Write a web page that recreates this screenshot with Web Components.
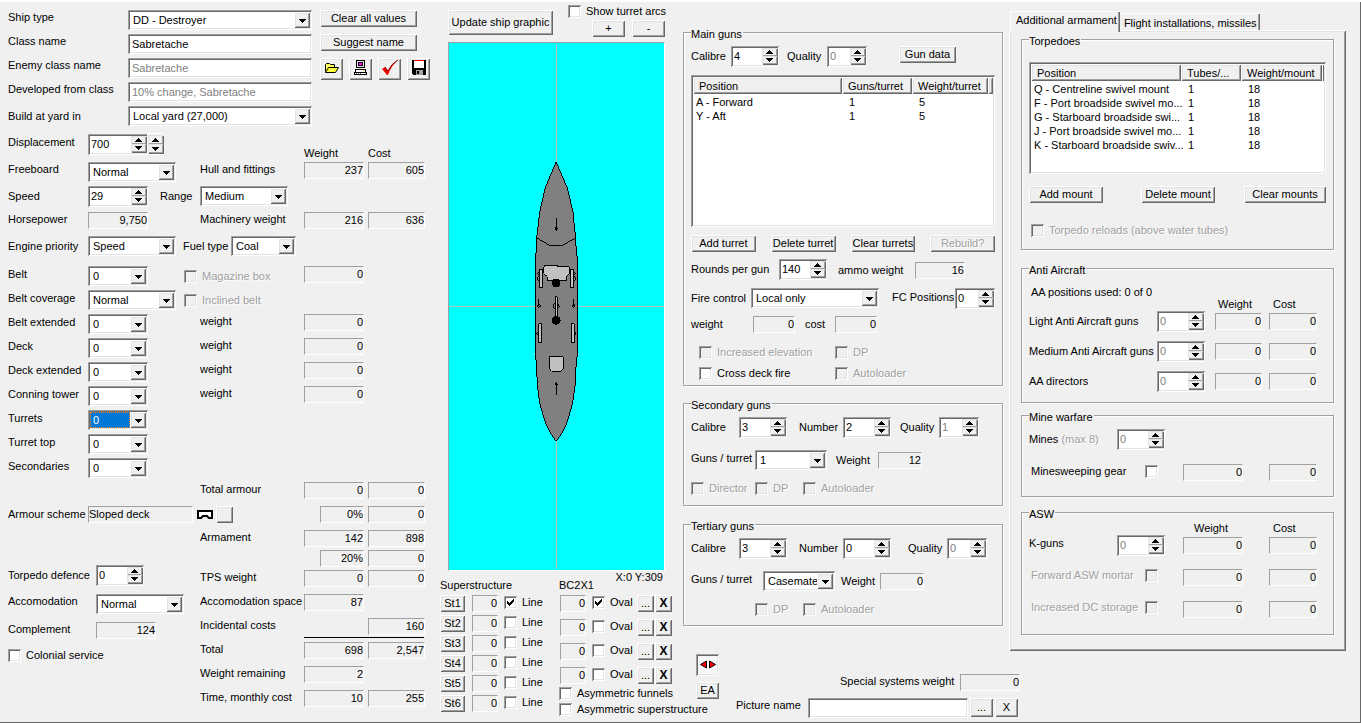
<!DOCTYPE html>
<html lang="en">
<head>
<meta charset="utf-8">
<title>Ship design</title>
<style>
html,body{margin:0;height:100%}
body{font:11px/14px "Liberation Sans",Arial,sans-serif;color:#000;background:#f0f0f0}
</style>
</head>
<body>
<ship-designer></ship-designer>
<script>
const BASE = `
*{box-sizing:border-box}
:host{
  --sunken:inset 1px 1px #a0a0a0,inset -1px -1px #fff,inset 2px 2px #696969,inset -2px -2px #e3e3e3;
  --raised:inset 1px 1px #fff,inset -1px -1px #696969,inset 2px 2px #e3e3e3,inset -2px -2px #a0a0a0;
}
button,input,select,output{font:inherit;color:inherit;margin:0;border:0;padding:0;border-radius:0;outline:0}
.row{display:flex;align-items:flex-start}
.cols{display:grid;grid-template-columns:var(--cols);align-items:start}
.dim{color:#a0a0a0;text-shadow:1px 1px #fff}
`;
const FIELD = `
:host{display:flex;align-items:flex-start}
.cap{flex:none;padding-top:var(--lt,1px);white-space:nowrap}
`;
class View extends HTMLElement {
  connectedCallback() {
    if (this.shadowRoot) return;
    const t = document.createElement('template');
    t.innerHTML = `<style>${BASE}</style>` + this.view();
    this.attachShadow({mode: 'open'}).append(t.content.cloneNode(true));
  }
  a(name, fallback = '') { return this.getAttribute(name) ?? fallback; }
  get off() { return this.hasAttribute('disabled') ? 'disabled' : ''; }
  get aria() { return this.hasAttribute('name') ? `aria-label="${this.a('name')}"` : ''; }
}
const define = (tag, view) => customElements.define(tag, class extends View { view() { return view(this); } });

define('ui-text', e => `<style>${FIELD}
.cap{width:${e.a('lw', 0)}px}
input{width:${e.a('w')}px;height:20px;padding:2px 4px;background:#fff;box-shadow:var(--sunken)}
input:disabled{color:#808080}
</style><label class="cap" for="c"><slot></slot></label><input id="c" type="text" value="${e.a('value')}" ${e.off}>`);

define('ui-readout', e => `<style>${FIELD}
.cap{width:${e.a('lw', 0)}px}
output{width:${e.a('w')}px;height:17px;text-align:${e.a('align', 'right')};line-height:15px;border:1px solid;border-color:#a0a0a0 #fff #fff #a0a0a0;white-space:nowrap}
</style><label class="cap" for="c"><slot></slot></label><output id="c" ${e.aria}>${e.a('value')}</output>`);

define('ui-select', e => `<style>${FIELD}
.cap{width:${e.a('lw', 0)}px}
.box{position:relative;width:${e.a('w')}px;height:20px;padding:2px;background:#fff;box-shadow:var(--sunken)}
select{display:block;appearance:none;width:calc(100% - 16px);height:16px;padding-left:3px;background:#fff}
:host([active]) select{background:#0078d7;color:#fff;outline:1px dotted #ff8728;outline-offset:-1px}
svg{position:absolute;right:2px;top:2px;background:#f0f0f0;box-shadow:var(--raised);pointer-events:none}
</style><label class="cap" for="c"><slot></slot></label><div class="box"><select id="c"><option>${e.a('value')}</option></select>
<svg width="16" height="16" shape-rendering="crispEdges"><path d="M5 7h7v1h-1v1h-1v1H9v1H8v-1H7V9H6V8H5z"/></svg></div>`);

const ARROWS = `<button type="button" tabindex="-1" aria-label="Increase"><svg width="7" height="4" shape-rendering="crispEdges"><path d="M3 0h1v1h1v1h1v1h1v1H0V3h1V2h1V1h1z"/></svg></button><button type="button" tabindex="-1" aria-label="Decrease"><svg width="7" height="4" shape-rendering="crispEdges"><path d="M0 0h7v1H6v1H5v1H4v1H3V3H2V2H1V1H0z"/></svg></button>`;
const ARROW_CSS = `button{display:flex;align-items:center;justify-content:center;width:15px;height:50%;background:#f0f0f0;box-shadow:inset 1px 1px #e3e3e3,inset -1px -1px #a0a0a0,1px 1px #696969}`;
define('ui-spin', e => `<style>${FIELD}
.cap{width:${e.a('lw', 0)}px}
.box{display:flex;width:${e.a('w', 48)}px;height:21px;padding:2px;background:#fff;box-shadow:var(--sunken)}
input{flex:1;min-width:0;height:15px;padding-left:1px;background:#fff;appearance:textfield;-moz-appearance:textfield}
input::-webkit-inner-spin-button{display:none}
input:disabled{color:#808080}
.arrows{height:16px;flex:none}${ARROW_CSS}
</style><label class="cap" for="c"><slot></slot></label><div class="box"><input id="c" type="number" value="${e.a('value')}" ${e.off}><div class="arrows">${ARROWS}</div></div>`);

define('ui-updown', () => `<style>:host{display:block;width:15px;height:20px;padding:1px 0;background:#f0f0f0;box-shadow:1px 1px #fff,-1px -1px #fff}${ARROW_CSS}</style>${ARROWS}`);

define('ui-check', e => `<style>
:host{display:flex;align-items:center;height:13px}
label{white-space:nowrap;line-height:13px;width:${e.hasAttribute('lw') ? e.a('lw') + 'px' : 'auto'};order:${e.hasAttribute('trail') ? 0 : 2}}
.box{position:relative;order:1;flex:none;width:13px;height:13px;margin-right:${e.hasAttribute('trail') ? 0 : 5}px}
input{appearance:none;display:block;width:13px;height:13px;background:#fff;box-shadow:var(--sunken)}
input:disabled{background:#f0f0f0}
svg{position:absolute;left:3px;top:3px;display:none;pointer-events:none}
input:checked+svg{display:block}
</style><div class="box"><input id="c" type="checkbox" ${e.aria} ${e.hasAttribute('checked') ? 'checked' : ''} ${e.off}>
<svg width="7" height="7" shape-rendering="crispEdges"><path d="M0 2h1v1h1v1h1V3h1V2h1V1h1V0h1v3H6v1H5v1H4v1H3v1H2V6H1V5H0z"/></svg></div>
<label for="c" class="${e.off ? 'dim' : ''}"><slot></slot></label>`);

define('ui-button', e => `<style>
:host{display:block;min-width:0}
button{display:flex;align-items:center;justify-content:center;width:${e.hasAttribute('w') ? e.a('w') + 'px' : '100%'};height:${e.a('h', 17)}px;padding-bottom:2px;background:#f0f0f0;box-shadow:var(--raised);white-space:nowrap}
:host([strong]) button{font-weight:bold;font-size:12px}
:host([pressed]) button{background:repeating-conic-gradient(#fff 0 25%,#f0f0f0 0 50%) 0 0/2px 2px;box-shadow:var(--sunken)}
</style><button type="button" class="${e.off ? 'dim' : ''}" ${e.aria} ${e.off}><slot></slot></button>`);

define('ui-group', e => `<style>
:host{display:block}
fieldset{min-width:0;margin:0;padding:0 7px var(--pb,10px);border:1px solid #a0a0a0;box-shadow:1px 1px #fff,inset 1px 1px #fff}
legend{padding:4px 1px 0 0;background:#f0f0f0;background-clip:content-box}
</style><fieldset><legend>${e.a('caption')}</legend><slot></slot></fieldset>`);

define('ui-list', e => {
  const heads = e.a('heads').split('|'), widths = e.a('widths').split('|');
  const rows = e.a('rows').split(';').map(r => r.split('|'));
  return `<style>
:host{display:block}
.box{height:${e.a('h')}px;padding:2px;background:#fff;box-shadow:var(--sunken);overflow:hidden}
table{width:100%;table-layout:fixed;border-collapse:separate;border-spacing:0}
th{height:17px;padding:0 0 0 6px;text-align:left;font-weight:normal;background:#f0f0f0;box-shadow:var(--raised)}
td{height:14px;padding:0 0 0 7px}
td:first-child{padding-left:3px}
th,td{white-space:nowrap}
tbody::before{content:"";display:block;height:1px}
</style><div class="box"><table><colgroup>${widths.map(w => `<col style="width:${w}px">`).join('')}<col></colgroup>
<thead><tr>${heads.map(h => `<th scope="col">${h}</th>`).join('')}<th></th></tr></thead>
<tbody>${rows.map(r => `<tr>${r.map(c => `<td>${c}</td>`).join('')}<td></td></tr>`).join('')}</tbody></table></div>`;
});

const armourRow = (name, extra = '', w = 60, value = '0') =>
  `<div class="line"><div class="main"><ui-select lw="80" w="${w}" value="${value}" ${extra}>${name}</ui-select></div></div>`;
const weightedRow = name =>
  `<div class="line"><div class="main"><ui-select lw="80" w="60" value="0">${name}</ui-select><span>weight</span></div><ui-readout w="60" value="0" name="${name} weight"></ui-readout></div>`;

define('hull-panel', () => `<style>
:host{display:block;padding:10px 0 0 8px}
.identity{display:flex;gap:8px}
.stack>*{height:24px}
.low{--lt:3px}
.top{--lt:0px}
.actions{display:flex;flex-direction:column;gap:7px}
.icons{display:flex;gap:6px}
.line{display:flex;align-items:flex-start;height:24px}
.main{display:grid;grid-template-columns:192px auto;flex:0 0 296px;align-items:start}
.main.near{grid-template-columns:var(--near) auto}
.line>ui-readout+ui-readout{margin-left:4px}
.heads{display:grid;grid-template-columns:64px auto;align-self:end;padding-bottom:2px}
.results .line{justify-content:flex-start}
.results span{flex:0 0 104px;white-space:nowrap}
.results .small{padding-left:120px}
hr{width:120px;height:1px;margin:0 0 4px 104px;border:0;background:#000}
.bottom{display:grid;grid-template-columns:192px auto}
.side{padding-top:35px}
.side>*{margin-bottom:8px}
</style>
<div class="identity">
  <div class="stack top">
    <ui-select lw="120" w="184" value="DD - Destroyer">Ship type</ui-select>
    <ui-text lw="120" w="184" value="Sabretache">Class name</ui-text>
    <ui-text lw="120" w="184" value="Sabretache" disabled>Enemy class name</ui-text>
    <ui-text lw="120" w="184" value="10% change, Sabretache" disabled>Developed from class</ui-text>
    <ui-select class="low" lw="120" w="184" value="Local yard (27,000)">Build at yard in</ui-select>
  </div>
  <div class="actions">
    <ui-button w="97">Clear all values</ui-button>
    <ui-button w="97">Suggest name</ui-button>
    <div class="icons">
      <ui-button w="23" h="22" name="Open"><svg width="16" height="12" viewBox="0 0 16 12"><path d="M1.5 9.500v-7l1-1h3l1 1h4v3" fill="#ffff60" stroke="#000"/><path d="M1.5 10.500l3-5h10l-3 5z" fill="#ffff40" stroke="#000"/></svg></ui-button>
      <ui-button w="23" h="22" name="Print"><svg width="15" height="16" viewBox="0 0 15 16" shape-rendering="crispEdges"><path d="M3 0h9v8H3z"/><path d="M4 1h7v6H4z" fill="#e3e3e3"/><path d="M5 2h5v4H5z"/><path d="M6 3h3v2H6z" fill="#f0f"/><path d="M2 9h11v3h1v3H1v-3h1z"/><path d="M3 10h9v2H3z" fill="#fff"/><path d="M10 10h1v1h-1z" fill="#cc0"/><path d="M2 13h11v1H2z" fill="#fff"/><path d="M3 13h1v1H3zM5 13h1v1H5zM7 13h1v1H7z" fill="#808080"/></svg></ui-button>
      <ui-button w="23" h="22" name="Accept"><svg width="16" height="16" viewBox="0 0 16 16"><path d="M0 9l3-2 3 4q3-7 10-11Q9 6 6 15H5z" fill="#f00000"/><path d="M3 7l3 4q3-7 10-11" fill="none" stroke="#800"/></svg></ui-button>
      <ui-button w="23" h="22" name="Save"><svg width="16" height="16" viewBox="0 0 16 16" shape-rendering="crispEdges"><path d="M1 0h14v15H2l-1-1z"/><path d="M3 1h10v7H3z" fill="#fff"/><path d="M3 0h10v1H3z" fill="red"/><path d="M5 10h7v5H5z" fill="#a0a0a0"/><path d="M6 11h2v3H6z"/></svg></ui-button>
    </div>
  </div>
</div>
<div class="line" style="height:28px;margin-top:4px">
  <div class="main near" style="--near:140px"><ui-spin lw="80" w="60" value="700">Displacement</ui-spin><ui-updown></ui-updown></div>
  <div class="heads"><span>Weight</span><span>Cost</span></div>
</div>
<div class="line top"><div class="main"><ui-select lw="80" w="88" value="Normal">Freeboard</ui-select><span>Hull and fittings</span></div>
  <ui-readout w="60" value="237" name="Hull weight"></ui-readout><ui-readout w="57" value="605" name="Hull cost"></ui-readout></div>
<div class="line low" style="height:26px"><div class="main near" style="--near:152px"><ui-spin lw="80" w="60" value="29">Speed</ui-spin><ui-select lw="40" w="88" value="Medium">Range</ui-select></div></div>
<div class="line top"><div class="main"><ui-readout lw="80" w="60" value="9,750">Horsepower</ui-readout><span>Machinery weight</span></div>
  <ui-readout w="60" value="216" name="Machinery weight"></ui-readout><ui-readout w="57" value="636" name="Machinery cost"></ui-readout></div>
<div class="line low" style="height:30px"><div class="main near" style="--near:175px"><ui-select lw="80" w="88" value="Speed">Engine priority</ui-select><ui-select lw="48" w="65" value="Coal">Fuel type</ui-select></div></div>
<div class="line"><div class="main near" style="--near:176px"><ui-select lw="80" w="60" value="0">Belt</ui-select><ui-check disabled style="padding-top:7px">Magazine box</ui-check></div><ui-readout w="60" value="0" name="Belt weight"></ui-readout></div>
<div class="line"><div class="main near" style="--near:176px"><ui-select lw="80" w="88" value="Normal">Belt coverage</ui-select><ui-check disabled style="padding-top:7px">Inclined belt</ui-check></div></div>
${weightedRow('Belt extended')}${weightedRow('Deck')}${weightedRow('Deck extended')}${weightedRow('Conning tower')}
${armourRow('Turrets', 'active')}${armourRow('Turret top')}${armourRow('Secondaries')}
<div class="line"><div class="main"><span></span><span>Total armour</span></div><ui-readout w="60" value="0" name="Total armour weight"></ui-readout><ui-readout w="57" value="0" name="Total armour cost"></ui-readout></div>
<div class="line"><div class="main" style="grid-template-columns:189px 19px auto;flex-basis:312px"><ui-readout lw="80" w="105" align="left" value="Sloped deck">Armour scheme</ui-readout>
  <svg width="16" height="16" viewBox="0 0 16 16"><path d="M1 5h14v7h-3l-2-2H6l-2 2H1z" fill="#fff" stroke="#000" stroke-width="2"/></svg><ui-button w="17" name="Choose armour scheme"></ui-button></div>
  <ui-readout w="44" value="0%" name="Armour share"></ui-readout><ui-readout w="57" value="0" name="Armour scheme cost"></ui-readout></div>
<div class="bottom">
  <div class="side">
    <ui-spin class="low" lw="88" w="48" value="0">Torpedo defence</ui-spin>
    <ui-select class="top" lw="88" w="88" value="Normal">Accomodation</ui-select>
    <ui-readout class="top" lw="88" w="60" value="124">Complement</ui-readout>
    <ui-check style="padding-top:3px">Colonial service</ui-check>
  </div>
  <div class="results">
    <div class="line" style="height:20px"><span>Armament</span><ui-readout w="60" value="142" name="Armament weight"></ui-readout><ui-readout w="57" value="898" name="Armament cost"></ui-readout></div>
    <div class="line small" style="height:20px"><ui-readout w="44" value="20%" name="Armament share"></ui-readout><ui-readout w="57" value="0" name="Extra cost"></ui-readout></div>
    <div class="line"><span>TPS weight</span><ui-readout w="60" value="0" name="TPS weight"></ui-readout><ui-readout w="57" value="0" name="TPS cost"></ui-readout></div>
    <div class="line"><span>Accomodation space</span><ui-readout w="60" value="87" name="Accomodation space"></ui-readout></div>
    <div class="line" style="height:19px"><span style="flex-basis:168px">Incidental costs</span><ui-readout w="57" value="160" name="Incidental costs"></ui-readout></div>
    <hr>
    <div class="line"><span>Total</span><ui-readout w="60" value="698" name="Total weight"></ui-readout><ui-readout w="57" value="2,547" name="Total cost"></ui-readout></div>
    <div class="line"><span>Weight remaining</span><ui-readout w="60" value="2" name="Weight remaining"></ui-readout></div>
    <div class="line"><span>Time, monthly cost</span><ui-readout w="60" value="10" name="Build time"></ui-readout><ui-readout w="57" value="255" name="Monthly cost"></ui-readout></div>
  </div>
</div>`);

define('ship-plan', () => `<style>
:host{display:block;background:#0ff;border:1px solid;border-color:#a0a0a0 #fff #fff #a0a0a0;height:529px}
svg{display:block;width:100%;height:100%}
</style>
<svg viewBox="-323 -792 648 1584" role="img" aria-label="Ship plan view" shape-rendering="crispEdges">
<path d="M0-792V792M-2000 0H2000" stroke="#c0c0c0" stroke-width="3"/>
<g transform="translate(-169 -468)" fill="#c0c0c0" stroke="#000" stroke-width="3">
<path fill="#808080" d="M169 32L202 110L212 150L220 185L224 230L228 262L229 290L233 325V610L229 645L227 700L222 735L217 765L210 790L200 822L186 850L169 874L152 850L138 822L128 790L121 765L116 735L112 700L110 645L106 610V325L110 290V262L114 230L119 185L127 150L136 110z"/>
<path fill="none" d="M112 262L148 283H190L226 262"/>
<path d="M133 346L150 343H172V346H205L209 352V370L199 378V390H142V378L131 368V352z"/>
<g fill="#808080"><circle cx="118" cy="384" r="6"/><circle cx="221" cy="384" r="6"/><circle cx="115" cy="369" r="3"/><circle cx="224" cy="369" r="3"/><circle cx="116" cy="550" r="5"/><circle cx="223" cy="550" r="5"/><circle cx="169" cy="467" r="9"/></g>
<path d="M119 356h9v56h-9zM211 356h9v56h-9zM116 520h9v57h-9zM214 520h9v57h-9zM166 439h7v65h-7z"/>
<circle cx="169" cy="397" r="12" fill="#000"/><circle cx="169" cy="510" r="12" fill="#000"/>
<g fill="#808080"><circle cx="169" cy="233" r="3"/><circle cx="169" cy="702" r="3"/><circle cx="117" cy="466" r="4"/><circle cx="222" cy="466" r="4"/></g>
<path d="M169 201V240M169 695V735M115 445V465M220 445V465" fill="none"/>
<path d="M148 619H190V655L183 663H155L148 655z"/>
<path d="M102 613h3M235 613h3" stroke="#fff"/>
</g></svg>`);

const heights = [1, 2, 3, 4, 5, 6].map(n => `<div class="row part"><ui-button w="25">St${n}</ui-button><ui-readout w="26" value="0" name="Part ${n}"></ui-readout><ui-check ${n === 1 ? 'checked' : ''}>Line</ui-check></div>`).join('');
const funnels = [1, 2, 3, 4].map(n => `<div class="row funnel"><ui-readout w="26" value="0" name="Funnel ${n}"></ui-readout><ui-check lw="27" ${n === 1 ? 'checked' : ''}>Oval</ui-check><ui-button w="17" name="Edit funnel ${n}">...</ui-button><ui-button strong w="17" name="Remove funnel ${n}">X</ui-button></div>`).join('');
define('plan-panel', () => `<style>
:host{display:block;padding:5px 0 0 4px}
.head{display:flex;gap:15px;padding:0 0 5px 8px}
.head>ui-button{padding-top:5px}
.zoom{display:flex;gap:7px;padding:2px 0 0 24px}
ship-plan{margin:0 18px 0 8px}
.labels{display:grid;grid-template-columns:119px 1fr auto;height:24px;padding-right:20px;align-items:start}
.labels span{padding-top:7px}
.labels output{line-height:12px}
.parts{display:grid;grid-template-columns:119px auto}
.part{gap:7px;height:20px}
.funnel{height:24px;padding-left:1px}
.funnel ui-check{margin:1px 0 0 6px}
.part ui-check{margin:1px 0 0 -1px}
.funnel ui-button+ui-button{margin-left:1px}
.asym{display:grid;gap:3px;margin-top:-4px}
</style>
<div class="head"><ui-button w="105" h="25">Update ship graphic</ui-button>
<div><ui-check>Show turret arcs</ui-check><div class="zoom"><ui-button w="33">+</ui-button><ui-button w="33">-</ui-button></div></div></div>
<ship-plan></ship-plan>
<div class="labels"><span>Superstructure</span><span>BC2X1</span><output>X:0 Y:309</output></div>
<div class="parts"><div>${heights}</div><div>${funnels}<div class="asym"><ui-check>Asymmetric funnels</ui-check><ui-check>Asymmetric superstructure</ui-check></div></div></div>`);

define('guns-panel', () => `<style>
:host{display:block;padding-top:23px;--lt:3px}
.first{margin-top:5px}
.buttons{display:grid;grid-template-columns:repeat(4,1fr);gap:15px;margin-top:8px}
</style>
<ui-group caption="Main guns" style="--pb:5px">
  <div class="cols first" style="--cols:96px 112px auto"><ui-spin lw="40" value="4">Calibre</ui-spin><ui-spin lw="40" w="40" value="0" disabled>Quality</ui-spin><ui-button w="57">Gun data</ui-button></div>
  <ui-list style="margin-top:8px" h="152" heads="Position|Guns/turret|Weight/turret" widths="149|70|76" rows="A - Forward|1|5;Y - Aft|1|5"></ui-list>
  <div class="buttons"><ui-button>Add turret</ui-button><ui-button>Delete turret</ui-button><ui-button>Clear turrets</ui-button><ui-button disabled>Rebuild?</ui-button></div>
  <div class="cols" style="--cols:147px auto;margin-top:7px"><ui-spin lw="88" value="140">Rounds per gun</ui-spin><ui-readout lw="77" w="50" value="16" style="padding-top:3px;--lt:1px">ammo weight</ui-readout></div>
  <div class="cols" style="--cols:201px auto;margin-top:8px"><ui-select lw="60" w="128" value="Local only">Fire control</ui-select><ui-spin lw="63" w="40" value="0" style="--lt:2px">FC Positions</ui-spin></div>
  <div class="cols" style="--cols:114px auto;margin-top:7px;--lt:1px"><ui-readout lw="62" w="42" value="0">weight</ui-readout><ui-readout lw="30" w="42" value="0">cost</ui-readout></div>
  <div class="cols" style="--cols:136px auto;padding:13px 0 0 8px;row-gap:8px"><ui-check disabled>Increased elevation</ui-check><ui-check disabled>DP</ui-check><ui-check>Cross deck fire</ui-check><ui-check disabled>Autoloader</ui-check></div>
</ui-group>
<ui-group caption="Secondary guns" style="margin-top:8px">
  <div class="cols first" style="--cols:108px 101px auto"><ui-spin lw="48" value="3">Calibre</ui-spin><ui-spin lw="44" value="2">Number</ui-spin><ui-spin lw="39" w="40" value="1" disabled>Quality</ui-spin></div>
  <div class="cols" style="--cols:145px auto;margin-top:12px"><ui-select lw="64" w="72" value="1" style="--lt:1px">Guns / turret</ui-select><ui-readout lw="42" w="44" value="12" style="padding-top:2px;--lt:1px">Weight</ui-readout></div>
  <div class="cols" style="--cols:64px 48px auto;margin-top:12px"><ui-check disabled>Director</ui-check><ui-check disabled>DP</ui-check><ui-check disabled>Autoloader</ui-check></div>
</ui-group>
<ui-group caption="Tertiary guns" style="margin-top:9px;--pb:9px">
  <div class="cols first" style="--cols:108px 109px auto"><ui-spin lw="48" value="3">Calibre</ui-spin><ui-spin lw="44" value="0">Number</ui-spin><ui-spin lw="39" w="40" value="0" disabled>Quality</ui-spin></div>
  <div class="cols" style="--cols:150px auto;margin-top:12px"><ui-select lw="72" w="72" value="Casemates" style="--lt:1px">Guns / turret</ui-select><ui-readout lw="39" w="44" value="0" style="padding-top:2px;--lt:1px">Weight</ui-readout></div>
  <div class="cols" style="--cols:48px auto;padding:12px 0 0 64px"><ui-check disabled>DP</ui-check><ui-check disabled>Autoloader</ui-check></div>
</ui-group>`);

const aaRow = (name) => `<div class="cols aa" style="--cols:186px 54px auto"><ui-spin lw="128" value="0" disabled>${name}</ui-spin><ui-readout w="47" value="0" name="${name} weight"></ui-readout><ui-readout w="48" value="0" name="${name} cost"></ui-readout></div>`;
const sums = name => `<ui-readout w="60" value="0" name="${name} weight"></ui-readout><ui-readout w="48" value="0" name="${name} cost"></ui-readout>`;
define('armament-panel', () => `<style>
:host{display:block;padding-top:11px;--lt:3px}
.tabs{display:flex;align-items:flex-end;height:19px;padding-left:1px}
.tabs button{height:17px;padding:2px 3px 0 4px;line-height:14px;background:#f0f0f0;white-space:nowrap;box-shadow:inset 0 1px #fff,inset -1px 0 #696969,inset -2px 0 #a0a0a0}
.tabs button.on{position:relative;height:21px;margin-bottom:-2px;padding:0 3px 3px 6px;box-shadow:inset 1px 1px #fff,inset -1px 0 #696969,inset -2px 0 #a0a0a0}
.page{padding:0 12px 16px;box-shadow:var(--raised)}
.buttons{display:flex;margin-top:12px}
.buttons :nth-child(2){margin-left:38px}
.buttons :nth-child(3){margin-left:auto}
.aa{margin-bottom:9px}
.aa ui-readout,.kg ui-readout{padding-top:2px}
.aa:last-of-type{margin-bottom:0}
</style>
<div class="tabs" role="tablist"><button type="button" role="tab" aria-selected="true" class="on">Additional armament</button><button type="button" role="tab" aria-selected="false">Flight installations, missiles</button></div>
<div class="page">
<ui-group caption="Torpedoes" style="--pb:12px">
  <ui-list style="margin-top:14px" h="112" heads="Position|Tubes/...|Weight/mount" widths="150|60|81" rows="Q - Centreline swivel mount|1|18;F - Port broadside swivel mo...|1|18;G - Starboard broadside swi...|1|18;J - Port broadside swivel mo...|1|18;K - Starboard broadside swiv...|1|18"></ui-list>
  <div class="buttons"><ui-button w="74">Add mount</ui-button><ui-button w="74">Delete mount</ui-button><ui-button w="82">Clear mounts</ui-button></div>
  <ui-check disabled style="padding-left:2px;margin-top:21px">Torpedo reloads (above water tubes)</ui-check>
</ui-group>
<ui-group caption="Anti Aircraft" style="margin-top:9px;--pb:10px">
  <div class="cols" style="--cols:187px 55px auto;padding:8px 0 0 2px"><span>AA positions used: 0 of 0</span><span style="padding-top:12px">Weight</span><span style="padding-top:12px">Cost</span></div>
  ${aaRow('Light Anti Aircraft guns')}${aaRow('Medium Anti Aircraft guns')}${aaRow('AA directors')}
</ui-group>
<ui-group caption="Mine warfare" style="margin-top:3px;--pb:15px">
  <ui-spin lw="88" value="0" disabled style="margin-top:5px">Mines <span class="dim">(max 8)</span></ui-spin>
  <div class="cols" style="--cols:152px 86px auto;padding:14px 0 0 2px"><ui-check trail lw="114" style="padding-top:2px">Minesweeping gear</ui-check>${sums('Minesweeping')}</div>
</ui-group>
<ui-group caption="ASW" style="margin-top:6px;--pb:16px">
  <div class="cols" style="--cols:79px auto;padding-left:165px"><span>Weight</span><span>Cost</span></div>
  <div class="cols kg" style="--cols:154px 86px auto"><ui-spin lw="88" value="0" disabled style="--lt:1px">K-guns</ui-spin>${sums('K-guns')}</div>
  <div class="cols" style="--cols:152px 86px auto;padding:13px 0 0 2px"><ui-check disabled trail lw="114">Forward ASW mortar</ui-check>${sums('Forward mortar')}</div>
  <div class="cols" style="--cols:152px 86px auto;padding:15px 0 0 2px"><ui-check disabled trail lw="114">Increased DC storage</ui-check>${sums('DC storage')}</div>
</ui-group>
</div>`);

define('picture-bar', () => `<style>
:host{display:flex;gap:17px;padding:3px 0 0 13px}
.tools{display:grid;gap:6px;align-content:start}
.fields{padding-top:20px}
</style>
<div class="tools"><ui-button pressed w="23" h="22" name="Mirror"><svg width="16" height="9" viewBox="0 0 16 9"><path d="M6.500 1v7L.5 4.500zM9.500 1v7l6-3.500z" fill="red" stroke="#000"/></svg></ui-button><ui-button w="23">EA</ui-button></div>
<div class="fields">
  <ui-readout lw="120" w="60" value="0" style="padding-left:104px;--lt:0px">Special systems weight</ui-readout>
  <div class="row" style="gap:2px;margin-top:7px;--lt:0px"><ui-text lw="72" w="160" value="">Picture name</ui-text><ui-button w="23" h="19" name="Browse">...</ui-button><ui-button w="23" h="19" name="Clear picture">X</ui-button></div>
</div>`);

define('ship-designer', () => `<style>
:host{display:block;min-height:100vh;box-shadow:inset 0 2px #fff,inset -1px -1px #696969}
main{display:grid;grid-template-columns:minmax(436px,436fr) minmax(247px,247fr) minmax(678px,678fr);align-items:start}
.pair{display:grid;grid-template-columns:minmax(320px,320fr) minmax(337px,337fr);gap:6px;padding-right:15px;align-items:start}
</style>
<main><hull-panel></hull-panel><plan-panel></plan-panel><div><div class="pair"><guns-panel></guns-panel><armament-panel></armament-panel></div><picture-bar></picture-bar></div></main>`);
</script>
</body>
</html>
